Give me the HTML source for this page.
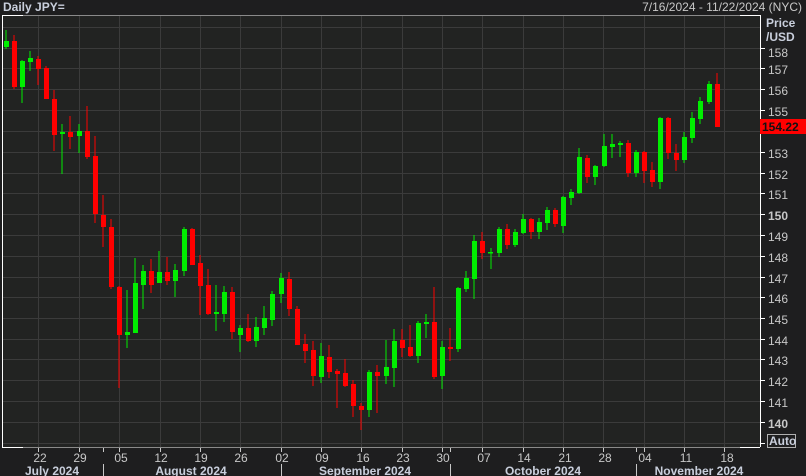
<!DOCTYPE html>
<html><head><meta charset="utf-8"><style>
html,body{margin:0;padding:0;background:#1e1e1f;width:806px;height:476px;overflow:hidden}
svg{display:block}
text{font-family:"Liberation Sans",Arial,sans-serif}
</style></head><body>
<svg width="806" height="476" viewBox="0 0 806 476" xmlns="http://www.w3.org/2000/svg">
<rect x="0" y="0" width="806" height="476" fill="#1e1e1f"/>
<rect x="2" y="15" width="758" height="432" fill="#222322"/>
<g stroke="#3b3b3b" stroke-width="1">
<line x1="2" y1="27.5" x2="760" y2="27.5"/>
<line x1="2" y1="48.5" x2="760" y2="48.5"/><line x1="2" y1="68.5" x2="760" y2="68.5"/><line x1="2" y1="89.5" x2="760" y2="89.5"/><line x1="2" y1="110.5" x2="760" y2="110.5"/><line x1="2" y1="131.5" x2="760" y2="131.5"/><line x1="2" y1="152.5" x2="760" y2="152.5"/><line x1="2" y1="173.5" x2="760" y2="173.5"/><line x1="2" y1="193.5" x2="760" y2="193.5"/><line x1="2" y1="214.5" x2="760" y2="214.5"/><line x1="2" y1="235.5" x2="760" y2="235.5"/><line x1="2" y1="256.5" x2="760" y2="256.5"/><line x1="2" y1="277.5" x2="760" y2="277.5"/><line x1="2" y1="297.5" x2="760" y2="297.5"/><line x1="2" y1="318.5" x2="760" y2="318.5"/><line x1="2" y1="339.5" x2="760" y2="339.5"/><line x1="2" y1="359.5" x2="760" y2="359.5"/><line x1="2" y1="380.5" x2="760" y2="380.5"/><line x1="2" y1="401.5" x2="760" y2="401.5"/><line x1="2" y1="422.5" x2="760" y2="422.5"/><line x1="2" y1="443.5" x2="760" y2="443.5"/>
<line x1="38.5" y1="15" x2="38.5" y2="447"/><line x1="79.5" y1="15" x2="79.5" y2="447"/><line x1="119.5" y1="15" x2="119.5" y2="447"/><line x1="160.5" y1="15" x2="160.5" y2="447"/><line x1="200.5" y1="15" x2="200.5" y2="447"/><line x1="240.5" y1="15" x2="240.5" y2="447"/><line x1="281.5" y1="15" x2="281.5" y2="447"/><line x1="321.5" y1="15" x2="321.5" y2="447"/><line x1="361.5" y1="15" x2="361.5" y2="447"/><line x1="402.5" y1="15" x2="402.5" y2="447"/><line x1="442.5" y1="15" x2="442.5" y2="447"/><line x1="482.5" y1="15" x2="482.5" y2="447"/><line x1="523.5" y1="15" x2="523.5" y2="447"/><line x1="563.5" y1="15" x2="563.5" y2="447"/><line x1="603.5" y1="15" x2="603.5" y2="447"/><line x1="644.5" y1="15" x2="644.5" y2="447"/><line x1="684.5" y1="15" x2="684.5" y2="447"/><line x1="724.5" y1="15" x2="724.5" y2="447"/>
</g>
<!-- frame -->
<g stroke-width="1">
<line x1="2" y1="15.5" x2="760" y2="15.5" stroke="#8a8a8a"/>
<line x1="2" y1="15.5" x2="23" y2="15.5" stroke="#ffffff"/>
<line x1="740" y1="15.5" x2="760" y2="15.5" stroke="#ffffff"/>
<line x1="2.5" y1="15" x2="2.5" y2="447" stroke="#ffffff"/>
<line x1="2" y1="447.5" x2="760" y2="447.5" stroke="#8a8a8a"/>
<line x1="2" y1="447.5" x2="23" y2="447.5" stroke="#ffffff"/>
<line x1="740" y1="447.5" x2="760" y2="447.5" stroke="#ffffff"/>
<line x1="760.5" y1="15" x2="760.5" y2="447" stroke="#ffffff"/>
</g>
<!-- candles -->
<g id="c">
<g fill="#00ee00">
<rect x="5.5" y="30" width="1" height="19"/><rect x="4" y="41" width="5" height="6"/>
</g>
<g fill="#ff0000"><rect x="13.5" y="35" width="1" height="54"/><rect x="12" y="41" width="5" height="46"/></g>
<g fill="#00ee00"><rect x="21.5" y="60" width="1" height="43"/><rect x="20" y="61" width="5" height="26"/></g>
<g fill="#00ee00"><rect x="29.5" y="51" width="1" height="20"/><rect x="28" y="58" width="5" height="4"/></g>
<g fill="#ff0000"><rect x="37.5" y="56" width="1" height="29"/><rect x="36" y="59" width="5" height="10"/></g>
<g fill="#ff0000"><rect x="45.5" y="66" width="1" height="33"/><rect x="44" y="68" width="5" height="31"/></g>
<g fill="#ff0000"><rect x="53.5" y="90" width="1" height="61"/><rect x="52" y="99" width="5" height="36"/></g>
<g fill="#00ee00"><rect x="61.5" y="124" width="1" height="50"/><rect x="60" y="132" width="5" height="2"/></g>
<g fill="#ff0000"><rect x="69.5" y="116" width="1" height="33"/><rect x="68" y="132" width="5" height="5"/></g>
<g fill="#00ee00"><rect x="78.5" y="124" width="1" height="29"/><rect x="77" y="131" width="5" height="5"/></g>
<g fill="#ff0000"><rect x="86.5" y="106" width="1" height="53"/><rect x="85" y="131" width="5" height="26"/></g>
<g fill="#ff0000"><rect x="94.5" y="136" width="1" height="87"/><rect x="93" y="156" width="5" height="58"/></g>
<g fill="#ff0000"><rect x="102.5" y="195" width="1" height="52"/><rect x="101" y="215" width="5" height="12"/></g>
<g fill="#ff0000"><rect x="110.5" y="219" width="1" height="70"/><rect x="109" y="227" width="5" height="60"/></g>
<g fill="#ff0000"><rect x="118.5" y="286" width="1" height="102"/><rect x="117" y="287" width="5" height="48"/></g>
<g fill="#00ee00"><rect x="126.5" y="290" width="1" height="58"/><rect x="125" y="332" width="5" height="3"/></g>
<g fill="#00ee00"><rect x="134.5" y="258" width="1" height="75"/><rect x="133" y="283" width="5" height="50"/></g>
<g fill="#00ee00"><rect x="142.5" y="265" width="1" height="44"/><rect x="141" y="271" width="5" height="14"/></g>
<g fill="#ff0000"><rect x="150.5" y="259" width="1" height="34"/><rect x="149" y="271" width="5" height="14"/></g>
<g fill="#00ee00"><rect x="158.5" y="251" width="1" height="32"/><rect x="157" y="272" width="5" height="11"/></g>
<g fill="#ff0000"><rect x="166.5" y="257" width="1" height="28"/><rect x="165" y="272" width="5" height="9"/></g>
<g fill="#00ee00"><rect x="174.5" y="264" width="1" height="33"/><rect x="173" y="270" width="5" height="11"/></g>
<g fill="#00ee00"><rect x="183.5" y="227" width="1" height="49"/><rect x="182" y="229" width="5" height="42"/></g>
<g fill="#ff0000"><rect x="191.5" y="228" width="1" height="37"/><rect x="190" y="229" width="5" height="36"/></g>
<g fill="#ff0000"><rect x="199.5" y="255" width="1" height="60"/><rect x="198" y="263" width="5" height="23"/></g>
<g fill="#ff0000"><rect x="207.5" y="269" width="1" height="46"/><rect x="206" y="285" width="5" height="29"/></g>
<g fill="#00ee00"><rect x="215.5" y="285" width="1" height="46"/><rect x="214" y="312" width="5" height="2"/></g>
<g fill="#00ee00"><rect x="223.5" y="286" width="1" height="36"/><rect x="222" y="292" width="5" height="22"/></g>
<g fill="#ff0000"><rect x="231.5" y="287" width="1" height="52"/><rect x="230" y="292" width="5" height="40"/></g>
<g fill="#00ee00"><rect x="239.5" y="325" width="1" height="27"/><rect x="238" y="328" width="5" height="7"/></g>
<g fill="#ff0000"><rect x="247.5" y="314" width="1" height="28"/><rect x="246" y="328" width="5" height="13"/></g>
<g fill="#00ee00"><rect x="255.5" y="317" width="1" height="30"/><rect x="254" y="327" width="5" height="14"/></g>
<g fill="#00ee00"><rect x="263.5" y="306" width="1" height="29"/><rect x="262" y="318" width="5" height="10"/></g>
<g fill="#00ee00"><rect x="271.5" y="291" width="1" height="35"/><rect x="270" y="294" width="5" height="26"/></g>
<g fill="#00ee00"><rect x="280.5" y="273" width="1" height="30"/><rect x="279" y="278" width="5" height="16"/></g>
<g fill="#ff0000"><rect x="288.5" y="272" width="1" height="44"/><rect x="287" y="279" width="5" height="30"/></g>
<g fill="#ff0000"><rect x="296.5" y="306" width="1" height="39"/><rect x="295" y="309" width="5" height="36"/></g>
<g fill="#ff0000"><rect x="304.5" y="334" width="1" height="29"/><rect x="303" y="344" width="5" height="7"/></g>
<g fill="#ff0000"><rect x="312.5" y="341" width="1" height="45"/><rect x="311" y="350" width="5" height="26"/></g>
<g fill="#00ee00"><rect x="320.5" y="343" width="1" height="40"/><rect x="319" y="356" width="5" height="21"/></g>
<g fill="#ff0000"><rect x="328.5" y="345" width="1" height="33"/><rect x="327" y="357" width="5" height="15"/></g>
<g fill="#ff0000"><rect x="336.5" y="369" width="1" height="39"/><rect x="335" y="371" width="5" height="3"/></g>
<g fill="#ff0000"><rect x="344.5" y="359" width="1" height="28"/><rect x="343" y="373" width="5" height="13"/></g>
<g fill="#ff0000"><rect x="352.5" y="380" width="1" height="37"/><rect x="351" y="384" width="5" height="22"/></g>
<g fill="#ff0000"><rect x="360.5" y="403" width="1" height="27"/><rect x="359" y="406" width="5" height="4"/></g>
<g fill="#00ee00"><rect x="368.5" y="370" width="1" height="47"/><rect x="367" y="372" width="5" height="38"/></g>
<g fill="#ff0000"><rect x="376.5" y="365" width="1" height="48"/><rect x="375" y="372" width="5" height="4"/></g>
<g fill="#00ee00"><rect x="385.5" y="340" width="1" height="44"/><rect x="384" y="367" width="5" height="9"/></g>
<g fill="#00ee00"><rect x="393.5" y="329" width="1" height="58"/><rect x="392" y="341" width="5" height="27"/></g>
<g fill="#ff0000"><rect x="401.5" y="329" width="1" height="28"/><rect x="400" y="340" width="5" height="8"/></g>
<g fill="#ff0000"><rect x="409.5" y="325" width="1" height="32"/><rect x="408" y="347" width="5" height="9"/></g>
<g fill="#00ee00"><rect x="417.5" y="321" width="1" height="42"/><rect x="416" y="323" width="5" height="33"/></g>
<g fill="#00ee00"><rect x="425.5" y="314" width="1" height="24"/><rect x="424" y="322" width="5" height="2"/></g>
<g fill="#ff0000"><rect x="433.5" y="287" width="1" height="92"/><rect x="432" y="322" width="5" height="55"/></g>
<g fill="#00ee00"><rect x="441.5" y="341" width="1" height="48"/><rect x="440" y="347" width="5" height="29"/></g>
<g fill="#ff0000"><rect x="449.5" y="328" width="1" height="33"/><rect x="448" y="347" width="5" height="2"/></g>
<g fill="#00ee00"><rect x="457.5" y="287" width="1" height="65"/><rect x="456" y="288" width="5" height="61"/></g>
<g fill="#00ee00"><rect x="465.5" y="271" width="1" height="21"/><rect x="464" y="278" width="5" height="11"/></g>
<g fill="#00ee00"><rect x="473.5" y="235" width="1" height="64"/><rect x="472" y="241" width="5" height="38"/></g>
<g fill="#ff0000"><rect x="481.5" y="232" width="1" height="27"/><rect x="480" y="241" width="5" height="12"/></g>
<g fill="#00ee00"><rect x="490.5" y="248" width="1" height="21"/><rect x="488" y="252" width="5" height="1.5"/></g>
<g fill="#00ee00"><rect x="498.5" y="227" width="1" height="30"/><rect x="497" y="229" width="5" height="24"/></g>
<g fill="#ff0000"><rect x="506.5" y="224" width="1" height="25"/><rect x="505" y="229" width="5" height="16"/></g>
<g fill="#00ee00"><rect x="514.5" y="229" width="1" height="18"/><rect x="513" y="232" width="5" height="13"/></g>
<g fill="#00ee00"><rect x="522.5" y="214" width="1" height="20"/><rect x="521" y="219" width="5" height="14"/></g>
<g fill="#ff0000"><rect x="530.5" y="218" width="1" height="21"/><rect x="529" y="219" width="5" height="13"/></g>
<g fill="#00ee00"><rect x="538.5" y="218" width="1" height="21"/><rect x="537" y="222" width="5" height="10"/></g>
<g fill="#00ee00"><rect x="546.5" y="207" width="1" height="23"/><rect x="545" y="210" width="5" height="13"/></g>
<g fill="#ff0000"><rect x="554.5" y="208" width="1" height="19"/><rect x="553" y="210" width="5" height="14"/></g>
<g fill="#00ee00"><rect x="562.5" y="196" width="1" height="37"/><rect x="561" y="197" width="5" height="29"/></g>
<g fill="#00ee00"><rect x="570.5" y="189" width="1" height="16"/><rect x="569" y="192" width="5" height="6"/></g>
<g fill="#00ee00"><rect x="578.5" y="148" width="1" height="46"/><rect x="577" y="157" width="5" height="36"/></g>
<g fill="#ff0000"><rect x="586.5" y="155" width="1" height="28"/><rect x="585" y="158" width="5" height="19"/></g>
<g fill="#00ee00"><rect x="594.5" y="165" width="1" height="20"/><rect x="593" y="166" width="5" height="11"/></g>
<g fill="#00ee00"><rect x="603.5" y="134" width="1" height="33"/><rect x="602" y="146" width="5" height="20"/></g>
<g fill="#00ee00"><rect x="611.5" y="134" width="1" height="24"/><rect x="610" y="144" width="5" height="3"/></g>
<g fill="#00ee00"><rect x="619.5" y="141" width="1" height="16"/><rect x="618" y="143" width="5" height="2"/></g>
<g fill="#ff0000"><rect x="627.5" y="140" width="1" height="37"/><rect x="626" y="143" width="5" height="30"/></g>
<g fill="#00ee00"><rect x="635.5" y="150" width="1" height="27"/><rect x="634" y="152" width="5" height="21"/></g>
<g fill="#ff0000"><rect x="643.5" y="151" width="1" height="32"/><rect x="642" y="152" width="5" height="19"/></g>
<g fill="#ff0000"><rect x="651.5" y="162" width="1" height="25"/><rect x="650" y="170" width="5" height="12"/></g>
<g fill="#00ee00"><rect x="659.5" y="117" width="1" height="72"/><rect x="658" y="118" width="5" height="64"/></g>
<g fill="#ff0000"><rect x="667.5" y="117" width="1" height="42"/><rect x="666" y="118" width="5" height="35"/></g>
<g fill="#ff0000"><rect x="675.5" y="144" width="1" height="27"/><rect x="674" y="153" width="5" height="7"/></g>
<g fill="#00ee00"><rect x="683.5" y="132" width="1" height="31"/><rect x="682" y="137" width="5" height="23"/></g>
<g fill="#00ee00"><rect x="691.5" y="112" width="1" height="31"/><rect x="690" y="118" width="5" height="20"/></g>
<g fill="#00ee00"><rect x="699.5" y="97" width="1" height="27"/><rect x="698" y="101" width="5" height="18"/></g>
<g fill="#00ee00"><rect x="708.5" y="81" width="1" height="23"/><rect x="707" y="84" width="5" height="18"/></g>
<g fill="#ff0000"><rect x="716.5" y="73" width="1" height="54"/><rect x="715" y="84" width="5" height="43"/></g>
</g>
<!-- top text -->
<text x="3" y="11" font-size="12" font-weight="bold" fill="#c9cfdc">Daily JPY=</text>
<text x="802" y="11" font-size="12" fill="#c8c8c8" text-anchor="end">7/16/2024 - 11/22/2024 (NYC)</text>
<!-- right axis -->
<text x="766" y="27" font-size="12" font-weight="bold" fill="#c9cfdc">Price</text>
<text x="766" y="41" font-size="12" font-weight="bold" fill="#c9cfdc">/USD</text>
<g stroke="#ffffff"><line x1="760" y1="48.5" x2="765" y2="48.5"/><line x1="760" y1="68.5" x2="765" y2="68.5"/><line x1="760" y1="89.5" x2="765" y2="89.5"/><line x1="760" y1="110.5" x2="765" y2="110.5"/><line x1="760" y1="131.5" x2="765" y2="131.5"/><line x1="760" y1="152.5" x2="765" y2="152.5"/><line x1="760" y1="173.5" x2="765" y2="173.5"/><line x1="760" y1="193.5" x2="765" y2="193.5"/><line x1="760" y1="214.5" x2="765" y2="214.5"/><line x1="760" y1="235.5" x2="765" y2="235.5"/><line x1="760" y1="256.5" x2="765" y2="256.5"/><line x1="760" y1="277.5" x2="765" y2="277.5"/><line x1="760" y1="297.5" x2="765" y2="297.5"/><line x1="760" y1="318.5" x2="765" y2="318.5"/><line x1="760" y1="339.5" x2="765" y2="339.5"/><line x1="760" y1="359.5" x2="765" y2="359.5"/><line x1="760" y1="380.5" x2="765" y2="380.5"/><line x1="760" y1="401.5" x2="765" y2="401.5"/><line x1="760" y1="422.5" x2="765" y2="422.5"/><line x1="760" y1="443.5" x2="765" y2="443.5"/></g>
<g font-size="12" fill="#c8c8c8">
<text x="768" y="57">158</text><text x="768" y="74">157</text><text x="768" y="95">156</text><text x="768" y="116">155</text>
<text x="768" y="158">153</text><text x="768" y="179">152</text><text x="768" y="199">151</text>
<text x="768" y="220" font-weight="bold">150</text>
<text x="768" y="241">149</text><text x="768" y="262">148</text><text x="768" y="283">147</text><text x="768" y="303">146</text><text x="768" y="324">145</text><text x="768" y="345">144</text><text x="768" y="365">143</text><text x="768" y="386">142</text><text x="768" y="407">141</text>
<text x="768" y="428" font-weight="bold">140</text>
</g>
<rect x="760" y="119" width="46" height="15" fill="#ff0000"/>
<text x="762" y="131" font-size="12" font-weight="bold" fill="#111">154.22</text>
<rect x="767.5" y="434.5" width="28" height="13" fill="none" stroke="#b0b0b0"/>
<text x="769" y="445" font-size="12" font-weight="bold" fill="#c9cfdc">Auto</text>
<!-- bottom axis -->
<g stroke="#c8c8c8"><line x1="38.5" y1="448" x2="38.5" y2="452"/><line x1="79.5" y1="448" x2="79.5" y2="452"/><line x1="119.5" y1="448" x2="119.5" y2="452"/><line x1="160.5" y1="448" x2="160.5" y2="452"/><line x1="200.5" y1="448" x2="200.5" y2="452"/><line x1="240.5" y1="448" x2="240.5" y2="452"/><line x1="281.5" y1="448" x2="281.5" y2="452"/><line x1="321.5" y1="448" x2="321.5" y2="452"/><line x1="361.5" y1="448" x2="361.5" y2="452"/><line x1="402.5" y1="448" x2="402.5" y2="452"/><line x1="442.5" y1="448" x2="442.5" y2="452"/><line x1="482.5" y1="448" x2="482.5" y2="452"/><line x1="523.5" y1="448" x2="523.5" y2="452"/><line x1="563.5" y1="448" x2="563.5" y2="452"/><line x1="603.5" y1="448" x2="603.5" y2="452"/><line x1="644.5" y1="448" x2="644.5" y2="452"/><line x1="684.5" y1="448" x2="684.5" y2="452"/><line x1="724.5" y1="448" x2="724.5" y2="452"/>
<line x1="103.5" y1="448" x2="103.5" y2="452"/><line x1="103.5" y1="464" x2="103.5" y2="476"/>
<line x1="281.5" y1="464" x2="281.5" y2="476"/>
<line x1="450.5" y1="448" x2="450.5" y2="452"/><line x1="450.5" y1="464" x2="450.5" y2="476"/>
<line x1="636.5" y1="448" x2="636.5" y2="452"/><line x1="636.5" y1="464" x2="636.5" y2="476"/></g>
<g font-size="12" fill="#c8c8c8" text-anchor="middle">
<text x="40" y="462">22</text><text x="80" y="462">29</text><text x="121" y="462">05</text><text x="161" y="462">12</text><text x="201" y="462">19</text><text x="241" y="462">26</text><text x="282" y="462">02</text><text x="322" y="462">09</text><text x="363" y="462">16</text><text x="403" y="462">23</text><text x="443" y="462">30</text><text x="484" y="462">07</text><text x="524" y="462">14</text><text x="565" y="462">21</text><text x="605" y="462">28</text><text x="645" y="462">04</text><text x="686" y="462">11</text><text x="727" y="462">18</text>
</g>
<g font-size="12" font-weight="bold" fill="#c9cfdc" text-anchor="middle">
<text x="52" y="475">July 2024</text><text x="191" y="475">August 2024</text><text x="365" y="475">September 2024</text><text x="543" y="475">October 2024</text><text x="699" y="475">November 2024</text>
</g>
</svg>
</body></html>
